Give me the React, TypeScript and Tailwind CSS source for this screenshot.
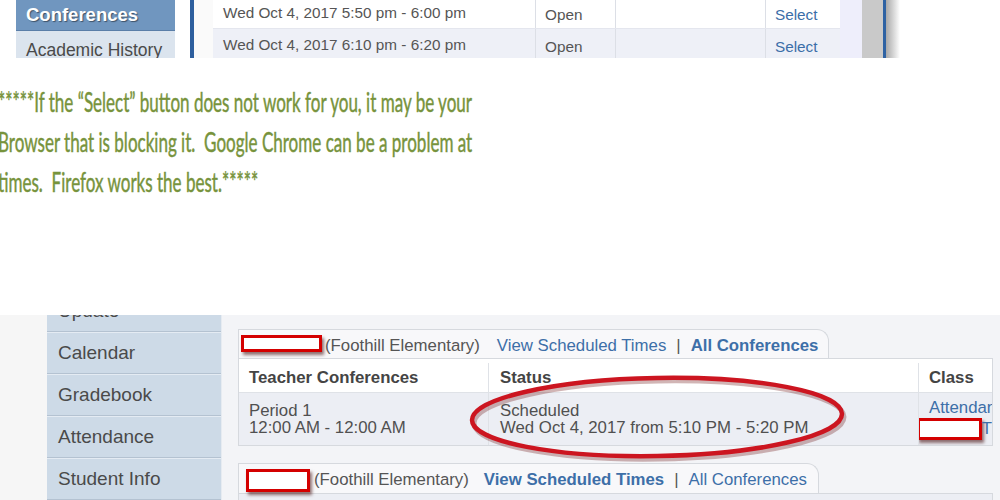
import React from "react";

const ui = "font-['Liberation_Sans',Arial,sans-serif]";

function RedBox({ w, h }: { w: string; h: string }) {
  return (
    <span
      className={`inline-block ${w} ${h} border-[3px] border-[#d40000] bg-white shadow-[2px_3px_3px_rgba(60,0,0,0.55)] align-middle`}
    />
  );
}

function TopImage() {
  return (
    <div className={`flex h-[58px] overflow-hidden bg-white ${ui}`}>
      <div className="w-[16px]" />
      <div className="flex w-[159px] flex-col">
        <div className="flex h-[31px] shrink-0 items-center border-b border-[#5a7ea8] bg-[#7096bf] pl-[10px] text-[18.5px] font-bold text-white [text-shadow:1px_1px_1px_rgba(0,0,0,0.45)]">
          Conferences
        </div>
        <div className="flex h-[38px] shrink-0 items-center bg-[#dbe4ee] pl-[10px] text-[17.5px] text-[#4a4a4a]">
          Academic History
        </div>
      </div>
      <div className="w-[15px]" />
      <div className="w-[4px] bg-[#2e5f9e]" />
      <div className="w-[19px] bg-[#fafafa]" />
      <div className="flex w-[627px] flex-col text-[15.3px] text-[#555]">
        {[
          { t: "Wed Oct 4, 2017 5:50 pm - 6:00 pm", bg: "bg-white", first: true },
          { t: "Wed Oct 4, 2017 6:10 pm - 6:20 pm", bg: "bg-[#eef0f7]", first: false },
        ].map((r) => (
          <div
            key={r.t}
            className={`flex h-[32px] shrink-0 items-center border-b border-[#e4e6ee] ${r.bg} ${r.first ? "-mt-[3px]" : ""}`}
          >
            <div className="w-[322px] pl-[10px] pt-[2px]">{r.t}</div>
            <div className="h-full w-[80px] border-l border-[#dcdfe6] pl-[9px] pt-[2px] leading-[32px]">Open</div>
            <div className="h-full w-[150px] border-l border-[#dcdfe6]" />
            <div className="h-full w-[75px] border-l border-[#dcdfe6] pl-[9px] pt-[2px] leading-[32px] text-[#3b6ea8]">Select</div>
          </div>
        ))}
      </div>
      <div className="w-[22px] bg-[#eeeefb]" />
      <div className="w-[21px] bg-[#c9c9c9]" />
      <div className="w-[3px] bg-[#2e62a3]" />
      <div className="w-[14px] bg-gradient-to-r from-[#a9a9a9] to-white" />
    </div>
  );
}

function Note() {
  const line =
    "h-[40px] whitespace-nowrap leading-[40px] origin-left scale-x-[0.655] -ml-[2px] [-webkit-text-stroke:0.45px_#77933c]";
  return (
    <div className="mt-[24px] font-['Lato','Open_Sans',sans-serif] text-[26px] text-[#77933c]">
      <div className={line}>*****If the “Select” button does not work for you, it may be your</div>
      <div className={line}>Browser that is blocking it.&nbsp; Google Chrome can be a problem at</div>
      <div className={line}>times.&nbsp; Firefox works the best.*****</div>
    </div>
  );
}

function SideItem({ label, first }: { label: string; first?: boolean }) {
  return (
    <div
      className={`flex h-[42px] shrink-0 items-center border-b border-t border-b-[#b4c2d1] border-t-[#e4ebf3] pl-[11px] text-[19px] text-[#4a4a4a] ${first ? "-mt-[25px]" : ""}`}
    >
      {label}
    </div>
  );
}

function BottomImage() {
  return (
    <div className={`relative mt-[113px] flex h-[185px] overflow-hidden bg-[#f3f4f7] ${ui}`}>
      <div className="w-[47px] bg-[#f6f6f6]" />
      <div className="flex w-[175px] flex-col overflow-hidden border-r border-[#e6ebf1] bg-[#cddae7]">
        <SideItem label="Update" first />
        <SideItem label="Calendar" />
        <SideItem label="Gradebook" />
        <SideItem label="Attendance" />
        <SideItem label="Student Info" />
      </div>
      <div className="flex flex-1 flex-col pl-[16px] pt-[14px]">
        <div className="flex h-[31px] w-[591px] items-center rounded-tr-[12px] border border-b-0 border-[#d6d9de] bg-[#f8f8fa] pt-[3px] text-[16.8px]">
          <span className="w-[2px]" />
          <span className="-mt-[4px] flex">
            <RedBox w="w-[81px]" h="h-[17px]" />
          </span>
          <span className="ml-[3px] text-[#555]">(Foothill Elementary)</span>
          <span className="ml-[17px] text-[#3d6fa8]">View Scheduled Times</span>
          <span className="ml-[10px] text-[#555]">|</span>
          <span className="ml-[10px] font-bold text-[#3d6fa8]">All Conferences</span>
        </div>
        <div className="flex w-[755px] flex-col border border-[#d6d9de] text-[16.8px] text-[#505050]">
          <div className="flex h-[33px] items-center bg-white pt-[4px] font-bold text-[#444]">
            <div className="w-[249px] pl-[10px]">Teacher Conferences</div>
            <div className="flex h-full w-[430px] items-center border-l border-[#dfe2e7] pl-[11px]">Status</div>
            <div className="flex h-full flex-1 items-center border-l border-[#dfe2e7] pl-[10px]">Class</div>
          </div>
          <div className="flex h-[53px] items-center border-t border-[#dfe2e7] bg-[#eceef4] pt-[0px] leading-[17px]">
            <div className="w-[249px] pl-[10px]">
              <div>Period 1</div>
              <div>12:00 AM - 12:00 AM</div>
            </div>
            <div className="flex h-full w-[430px] flex-col justify-center border-l border-[#dfe2e7] pl-[11px]">
              <div>Scheduled</div>
              <div>Wed Oct 4, 2017 from 5:10 PM - 5:20 PM</div>
            </div>
            <div className="flex h-full flex-1 flex-col justify-center overflow-hidden border-l border-[#dfe2e7] pl-[10px]">
              <div className="whitespace-nowrap text-[#3d6fa8]">Attendance</div>
              <div className="-ml-[12px] mt-[2px] flex items-center">
                <RedBox w="w-[70px]" h="h-[22px]" />
                <span className="text-[#3d6fa8]">T</span>
              </div>
            </div>
          </div>
        </div>
        <div className="mt-[17px]">
          <div className="flex h-[30px] w-[581px] items-center rounded-tr-[12px] border border-b-0 border-[#d6d9de] bg-[#f8f8fa] pt-[1px] text-[16.8px]">
            <span className="w-[7px]" />
            <span className="mt-[3px] flex">
              <RedBox w="w-[64px]" h="h-[23px]" />
            </span>
            <span className="ml-[4px] text-[#555]">(Foothill Elementary)</span>
            <span className="ml-[15px] font-bold text-[#3d6fa8]">View Scheduled Times</span>
            <span className="ml-[10px] text-[#555]">|</span>
            <span className="ml-[10px] text-[#3d6fa8]">All Conferences</span>
          </div>
          <div className="h-[20px] w-[755px] border border-[#d6d9de] bg-[#eceef4]" />
        </div>
      </div>
      <svg
        className="pointer-events-none absolute left-0 top-0 h-[185px] w-[1000px]"
        viewBox="0 0 1000 185"
      >
        <ellipse
          cx="657"
          cy="102"
          rx="185"
          ry="39"
          fill="none"
          stroke="#7a2a2a"
          strokeOpacity="0.35"
          strokeWidth="5"
          transform="translate(2 3) rotate(-1 657 102)"
        />
        <ellipse
          cx="657"
          cy="102"
          rx="185"
          ry="39"
          fill="none"
          stroke="#cc1520"
          strokeWidth="4.5"
          transform="rotate(-1 657 102)"
        />
      </svg>
    </div>
  );
}

export default function App() {
  return (
    <div className="h-[500px] w-[1000px] overflow-hidden bg-white">
      <TopImage />
      <Note />
      <BottomImage />
    </div>
  );
}
